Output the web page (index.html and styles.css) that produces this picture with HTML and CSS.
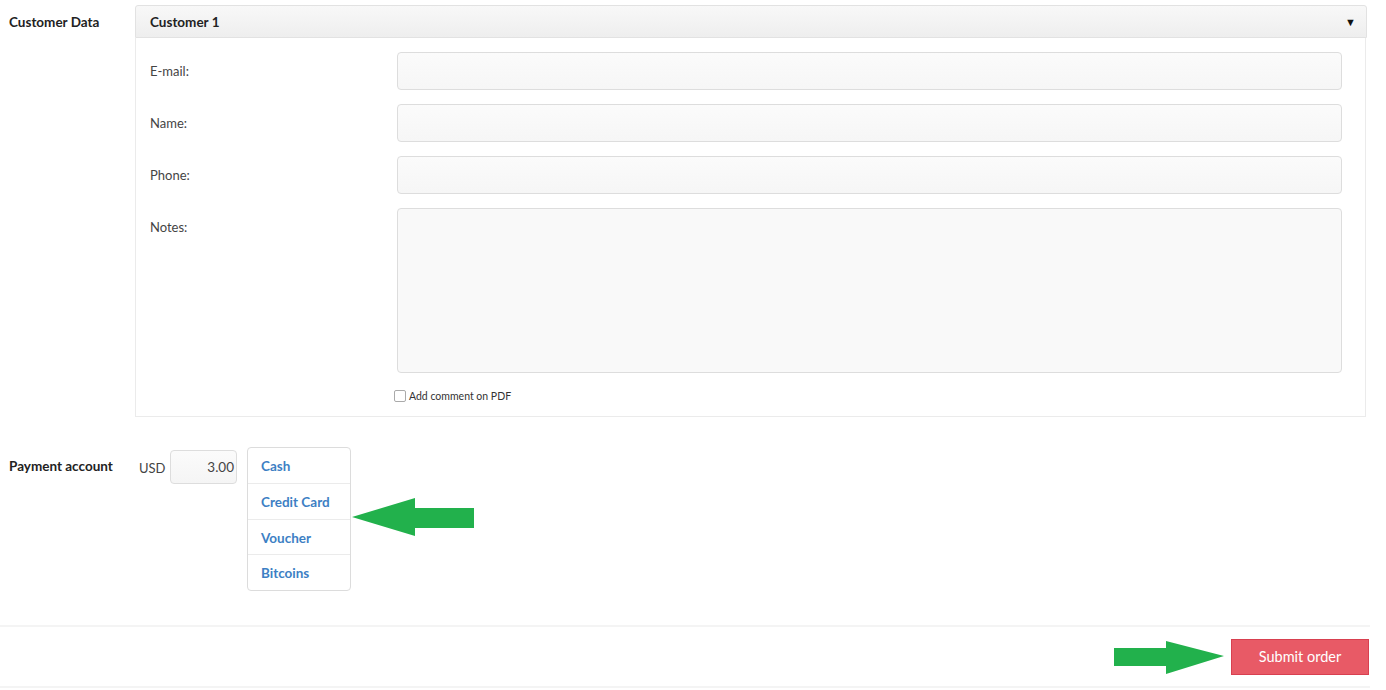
FILE: index.html
```html
<!DOCTYPE html>
<html>
<head>
<meta charset="utf-8">
<link rel="stylesheet" href="styles.css">
</head>
<body>
<div class="page">
  <section class="customer">
    <div class="side-label">Customer Data</div>
    <div class="panel">
      <div class="panel-head">
        <span>Customer 1</span>
        <span class="caret">▼</span>
      </div>
      <div class="panel-body">
        <div class="field">
          <label>E-mail:</label>
          <div class="input"></div>
        </div>
        <div class="field">
          <label>Name:</label>
          <div class="input"></div>
        </div>
        <div class="field">
          <label>Phone:</label>
          <div class="input"></div>
        </div>
        <div class="field">
          <label>Notes:</label>
          <div class="input textarea"></div>
        </div>
        <div class="check-row">
          <span class="checkbox"></span>
          <span class="check-label">Add comment on PDF</span>
        </div>
      </div>
    </div>
  </section>

  <section class="payment">
    <div class="side-label pay-label">Payment account</div>
    <div class="currency">USD</div>
    <div class="amount">3.00</div>
    <div class="menu-wrap">
      <ul class="menu">
        <li>Cash</li>
        <li>Credit Card</li>
        <li>Voucher</li>
        <li>Bitcoins</li>
      </ul>
      <svg class="arrow arrow-left" width="124" height="40" viewBox="0 0 124 40">
        <polygon points="0,19 63,0 63,10 122,10 122,30 63,30 63,38" fill="#22b14c"/>
      </svg>
    </div>
  </section>

  <footer class="footer">
    <div class="submit-wrap">
      <svg class="arrow arrow-right" width="112" height="34" viewBox="0 0 112 34">
        <polygon points="0,7 52,7 52,0 110,15 52,33 52,25 0,25" fill="#22b14c"/>
      </svg>
      <button class="submit">Submit order</button>
    </div>
  </footer>
</div>
</body>
</html>
```
FILE: styles.css
```css
* { box-sizing: border-box; }
html, body { margin: 0; padding: 0; background: #fff; }
body {
  font-family: Lato, "Open Sans", "Liberation Sans", sans-serif;
  color: #333;
  width: 1386px;
  height: 690px;
  overflow: hidden;
}
.page { position: relative; }

.customer {
  display: flex;
  padding-top: 5px;
}
.side-label {
  width: 135px;
  padding-left: 9px;
  padding-top: 9px;
  font-size: 13.5px;
  font-weight: 700;
  color: #222;
}
.panel { width: 1232px; }
.panel-head {
  height: 33px;
  border: 1px solid #e2e2e2;
  border-radius: 3px 3px 0 0;
  background: linear-gradient(#f8f8f8, #eeeeee);
  display: flex;
  align-items: center;
  justify-content: space-between;
  padding: 0 10px 0 14px;
  font-size: 13.5px;
  font-weight: 700;
  color: #222;
}
.caret { font-size: 11px; color: #111; }
.panel-body {
  width: 1231px;
  border: 1px solid #ebebeb;
  border-top: none;
  padding: 14px 23px 12px 14px;
}
.field {
  display: flex;
  align-items: flex-start;
  margin-bottom: 14px;
}
.field label {
  width: 247px;
  font-size: 13px;
  color: #444;
  padding-top: 11px;
}
.input {
  width: 946px;
  height: 38px;
  border: 1px solid #dddddd;
  border-radius: 4px;
  background: linear-gradient(#fbfbfb, #f6f6f6);
}
.textarea { height: 165px; background: #f9f9f9; }
.field:nth-child(4) { margin-bottom: 15px; }
.check-row {
  display: flex;
  align-items: center;
  margin-left: 244px;
  height: 16px;
}
.checkbox {
  width: 12px;
  height: 12px;
  border: 1px solid #aaa;
  border-radius: 2px;
  background: #fff;
  margin-right: 3px;
}
.check-label { font-size: 10.5px; color: #333; }

.payment {
  display: flex;
  align-items: flex-start;
  margin-top: 30px;
}
.pay-label {
  width: 139px;
  padding-top: 11px;
}
.currency {
  font-size: 13px;
  color: #444;
  padding-top: 13px;
  width: 31px;
}
.amount {
  width: 67px;
  height: 34px;
  margin-top: 3px;
  border: 1px solid #ddd;
  border-radius: 4px;
  background: linear-gradient(#fbfbfb, #f5f5f5);
  font-size: 13.5px;
  color: #444;
  text-align: right;
  padding: 8px 2px 0 0;
}
.menu-wrap { position: relative; margin-left: 10px; }
.menu {
  list-style: none;
  margin: 0;
  padding: 0;
  width: 104px;
  border: 1px solid #dcdcdc;
  border-radius: 4px;
  background: #fff;
}
.menu li {
  height: 35.5px;
  line-height: 36px;
  padding-left: 13px;
  font-size: 13.5px;
  font-weight: 700;
  color: #3d7fc4;
  border-top: 1px solid #ebebeb;
}
.menu li:first-child { border-top: none; height: 35px; }
.arrow { position: absolute; }
.arrow-left { left: 105px; top: 51px; }

.footer {
  margin-top: 34px;
  border-top: 2px solid #f4f4f4;
  border-bottom: 2px solid #f4f4f4;
  height: 63px;
  display: flex;
  justify-content: flex-end;
  padding-top: 12px;
  width: 1370px;
}
.submit-wrap { position: relative; }
.arrow-right { right: 144px; top: 2px; }
.submit {
  width: 138px;
  height: 36px;
  border: 1px solid #d84050;
  background: #e85a66;
  color: #fff;
  font-family: Lato, "Open Sans", sans-serif;
  font-size: 14.5px;
  margin-right: 1px;
}
```
